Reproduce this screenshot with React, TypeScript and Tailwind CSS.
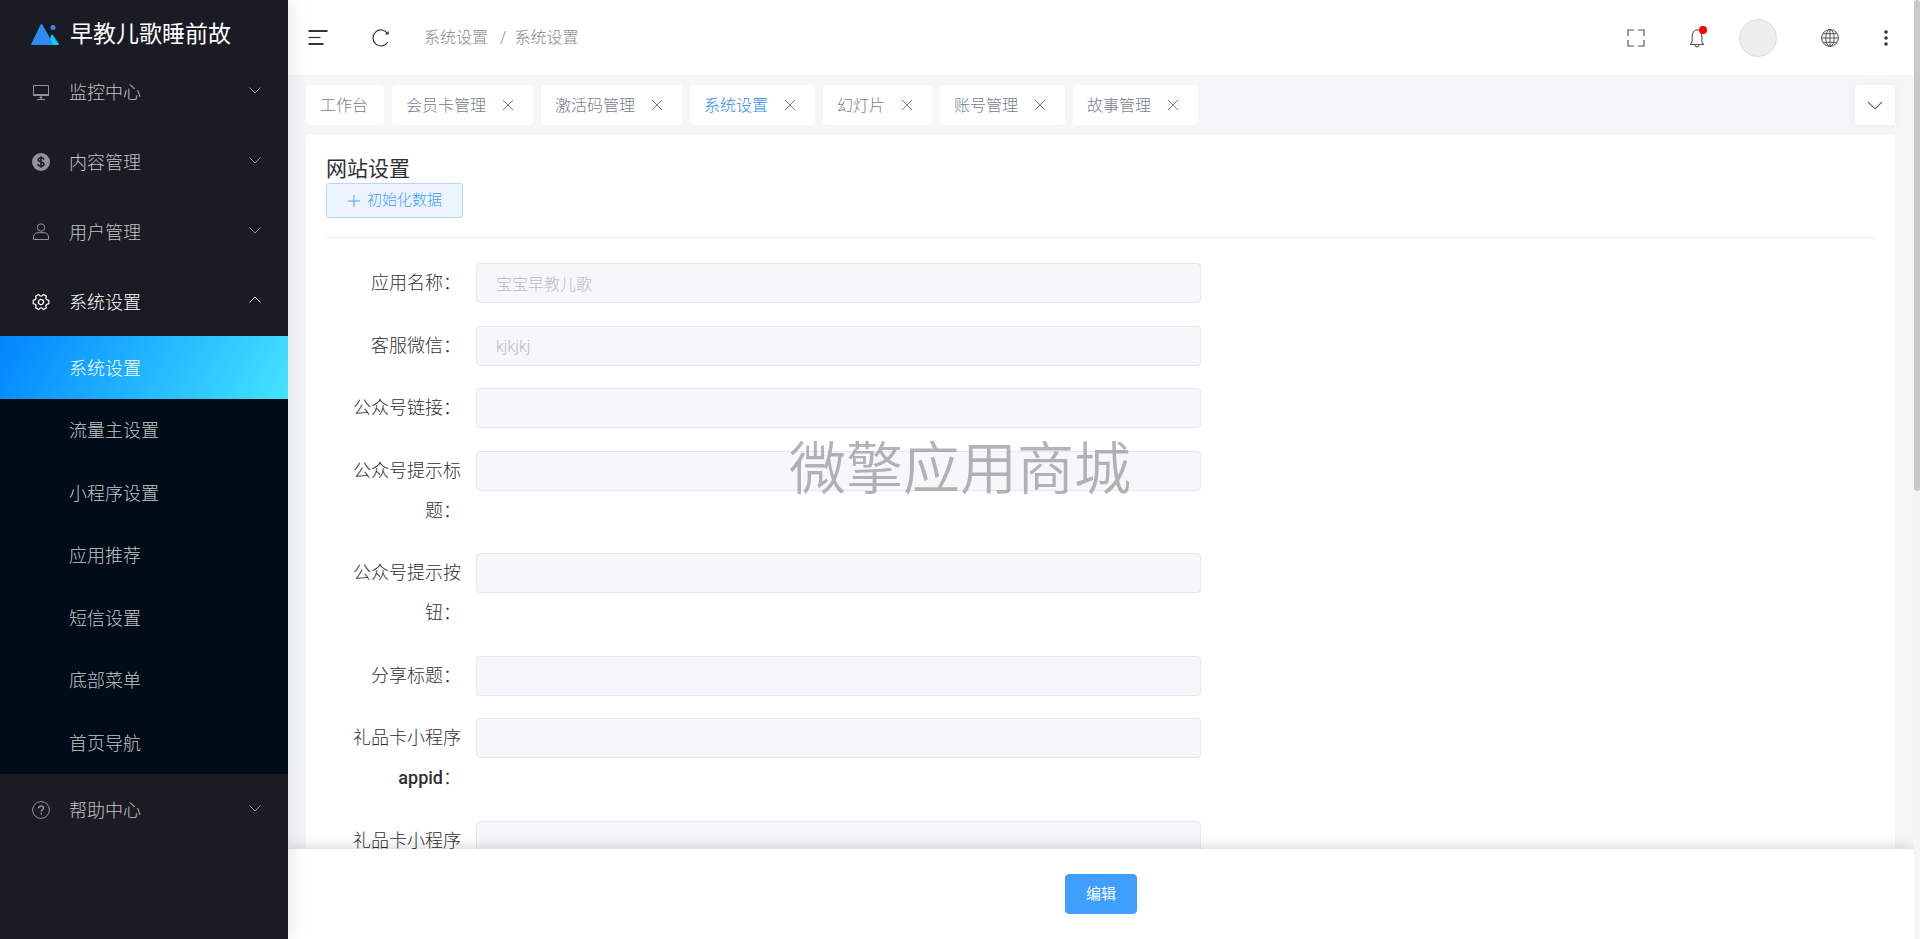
import React from 'react';
import clsx from 'clsx';

type IconProps = { className?: string };

const LogoIcon = () => (
  <svg viewBox="0 0 28 22" className="w-7 h-[22px]" aria-hidden="true">
    <path d="M20.2 12.2a1 1 0 0 1 1.8 0l5.6 8.6a.7.7 0 0 1-.6 1.2H17z" fill="#00d0ff" />
    <path d="M9.6 1.6a1 1 0 0 1 1.8 0l10.3 18.6a1.200 1.200 0 0 1-1 1.800H.8a.7.7 0 0 1-.6-1.100z" fill="#2d8cf0" />
    <circle cx="22" cy="4.500" r="2.500" fill="#2d8cf0" />
  </svg>
);

const MonitorIcon = () => (
  <svg viewBox="0 0 18 18" className="size-[18px]" fill="none" stroke="currentColor" aria-hidden="true">
    <path d="M1.500 2.500h15v9.500h-15z" />
    <path d="M1 12h16" strokeWidth="2" />
    <path d="M9 13v3M5 16.500h8" strokeWidth="1.200" />
    <path d="M7.500 14.500h3" />
  </svg>
);

const DollarIcon = () => (
  <svg viewBox="0 0 18 18" className="size-[18px]" aria-hidden="true">
    <circle cx="9" cy="9" r="9" fill="currentColor" />
    <path
      d="M11.800 6.700C11.600 5.500 10.500 4.800 9 4.800c-1.600 0-2.800.7-2.800 2 0 2.800 5.800 1.500 5.800 4.300 0 1.300-1.300 2.100-3 2.100s-2.900-.8-3-2.200M9 3.200v11.600"
      fill="none"
      stroke="#1b1b24"
      strokeWidth="1.500"
    />
  </svg>
);

const UserIcon = () => (
  <svg viewBox="0 0 18 18" className="size-[18px]" fill="none" stroke="currentColor" aria-hidden="true">
    <circle cx="9" cy="4.500" r="3.700" />
    <path d="M1.500 16.500v-2.500c0-2.700 2-4.300 4.500-4.300h6c2.500 0 4.500 1.600 4.500 4.300v2.500z" />
  </svg>
);

const SettingIcon = () => (
  <svg viewBox="32 32 960 960" className="size-[18px]" fill="currentColor" aria-hidden="true">
    <path
      transform="rotate(30 512 512)"
      d="M600.704 64a32 32 0 0 1 30.464 22.208l35.2 109.376c14.784 7.232 28.928 15.360 42.432 24.512l112.384-24.192a32 32 0 0 1 34.432 15.360L944.320 364.800a32 32 0 0 1-4.032 37.504l-77.120 85.120a357.120 357.120 0 0 1 0 49.024l77.120 85.248a32 32 0 0 1 4.032 37.504l-88.704 153.600a32 32 0 0 1-34.432 15.296L708.800 803.904c-13.440 9.088-27.648 17.280-42.368 24.512l-35.264 109.376A32 32 0 0 1 600.704 960H423.296a32 32 0 0 1-30.464-22.208L357.696 828.480a351.616 351.616 0 0 1-42.560-24.640l-112.320 24.256a32 32 0 0 1-34.432-15.360L79.680 659.200a32 32 0 0 1 4.032-37.504l77.120-85.248a357.120 357.120 0 0 1 0-48.896l-77.120-85.248A32 32 0 0 1 79.680 364.800l88.704-153.600a32 32 0 0 1 34.432-15.296l112.320 24.256c13.568-9.152 27.776-17.408 42.560-24.640l35.200-109.312A32 32 0 0 1 423.232 64H600.640zm-23.424 64H446.720l-36.352 113.088-24.512 11.968a294.113 294.113 0 0 0-34.816 20.096l-22.656 15.360-116.224-25.088-65.280 113.152 79.680 88.192-1.920 27.136a293.120 293.120 0 0 0 0 40.192l1.920 27.136-79.808 88.192 65.344 113.152 116.224-25.024 22.656 15.296a294.113 294.113 0 0 0 34.816 20.096l24.512 11.968L446.720 896h130.688l36.480-113.152 24.448-11.904a288.282 288.282 0 0 0 34.752-20.096l22.592-15.296 116.288 25.024 65.280-113.152-79.744-88.192 1.920-27.136a293.120 293.120 0 0 0 0-40.256l-1.920-27.136 79.808-88.128-65.344-113.152-116.288 24.960-22.592-15.232a287.616 287.616 0 0 0-34.752-20.096l-24.448-11.904L577.344 128zM512 345a167 167 0 1 1 0 334 167 167 0 0 1 0-334zm0 64a103 103 0 1 0 0 206 103 103 0 0 0 0-206z"
    />
  </svg>
);

const HelpIcon = () => (
  <svg viewBox="0 0 18 18" className="size-[18px]" fill="none" stroke="currentColor" aria-hidden="true">
    <circle cx="9" cy="9" r="8.400" />
    <path d="M6.700 7.300c0-1.400 1-2.200 2.400-2.200s2.400.8 2.400 2c0 1.700-2.300 1.700-2.300 3.500" strokeWidth="1.500" />
    <path d="M9.200 11.800v1.600" strokeWidth="1.500" />
  </svg>
);

const ChevronIcon = ({ className }: IconProps) => (
  <svg viewBox="0 0 14 14" className={className} fill="none" stroke="currentColor" aria-hidden="true">
    <path d="M1.500 4.500 7 10l5.500-5.500" />
  </svg>
);

const CloseIcon = () => (
  <svg viewBox="0 0 18 18" className="size-[18px]" fill="none" stroke="currentColor" aria-hidden="true">
    <path d="m4 4 10 10M14 4 4 14" />
  </svg>
);

const FoldIcon = () => (
  <svg viewBox="0 0 20 20" className="size-5" fill="none" stroke="currentColor" strokeWidth="1.800" aria-hidden="true">
    <path d="M.5 3h19M.5 16h15" />
    <path d="M.5 9.500h12" strokeWidth="1.200" />
  </svg>
);

const RefreshIcon = () => (
  <svg viewBox="0 0 18 18" className="size-[18px]" fill="none" stroke="currentColor" strokeWidth="1.200" aria-hidden="true">
    <path d="M15.800 13.200A8 8 0 1 1 15.500 4.300" />
    <path d="M16.600 2v3.600h-3.800z" fill="currentColor" stroke="none" />
  </svg>
);

const FullscreenIcon = () => (
  <svg viewBox="0 0 18 18" className="size-[18px]" fill="none" stroke="currentColor" strokeWidth="1.200" aria-hidden="true">
    <path d="M1 7V1h6M11 1h6v6M17 11v6h-6M7 17H1v-6" />
  </svg>
);

const BellIcon = () => (
  <svg viewBox="0 0 16 20" className="w-4 h-5" fill="none" stroke="currentColor" strokeWidth="1.100" aria-hidden="true">
    <path d="M8 1v1M1 16.500h14M1.500 16.500c1-1.200 1.700-2.300 1.700-4V8.200c0-3.500 2-6.200 4.800-6.200s4.800 2.700 4.800 6.200v4.300c0 1.700.7 2.800 1.700 4" />
    <path d="M5.800 17.200a2.300 2.300 0 0 0 4.400 0" />
  </svg>
);

const GlobeIcon = () => (
  <svg viewBox="0 0 18 18" className="size-[18px]" fill="none" stroke="currentColor" aria-hidden="true">
    <circle cx="9" cy="9" r="8.400" />
    <ellipse cx="9" cy="9" rx="4.200" ry="8.400" />
    <path d="M9 .5v17M.5 9h17M2 4.700h14M2 13.300h14" />
  </svg>
);

const MoreIcon = () => (
  <svg viewBox="0 0 4 18" className="w-1 h-[18px]" fill="currentColor" aria-hidden="true">
    <circle cx="2" cy="3" r="1.800" />
    <circle cx="2" cy="9" r="1.800" />
    <circle cx="2" cy="15" r="1.800" />
  </svg>
);

const menus = [
  { title: '监控中心', icon: MonitorIcon },
  { title: '内容管理', icon: DollarIcon },
  { title: '用户管理', icon: UserIcon },
  {
    title: '系统设置',
    icon: SettingIcon,
    children: ['系统设置', '流量主设置', '小程序设置', '应用推荐', '短信设置', '底部菜单', '首页导航'],
  },
  { title: '帮助中心', icon: HelpIcon },
];

const tabs = [
  { title: '工作台', closable: false },
  { title: '会员卡管理', closable: true },
  { title: '激活码管理', closable: true },
  { title: '系统设置', closable: true, active: true },
  { title: '幻灯片', closable: true },
  { title: '账号管理', closable: true },
  { title: '故事管理', closable: true },
];

const fields = [
  { id: 'name', label: '应用名称：', value: '宝宝早教儿歌' },
  { id: 'wechat', label: '客服微信：', value: 'kjkjkj' },
  { id: 'link', label: '公众号链接：', value: '' },
  { id: 'tip-title', label: '公众号提示标题：', value: '' },
  { id: 'tip-button', label: '公众号提示按钮：', value: '' },
  { id: 'share-title', label: '分享标题：', value: '' },
  { id: 'gift-appid', label: '礼品卡小程序appid：', value: '' },
  { id: 'gift-path', label: '礼品卡小程序', value: '' },
];

const Sidebar = () => (
  <aside className="relative z-20 w-72 shrink-0 bg-[#1b1b24] shadow-[0_0_20px_rgba(0,0,0,0.12)]">
    <div className="flex items-center gap-[11px] h-14 pl-[31px] pt-3">
      <LogoIcon />
      <span className="pt-0.5 text-[23px] leading-7 font-normal text-white whitespace-nowrap">早教儿歌睡前故</span>
    </div>
    <nav>
      {menus.map(({ title, icon: Icon, children }) => (
        <div key={title}>
          <button
            type="button"
            className={clsx(
              'flex items-center w-full h-[70px] pt-0.5 pl-8 pr-[26px] text-lg',
              children ? 'text-white' : 'text-[#909399]'
            )}
          >
            <Icon />
            <span className={clsx('ml-[19px] pt-0.5', children ? 'text-white' : 'text-[#c4c4c6]')}>{title}</span>
            <ChevronIcon className={clsx('ml-auto mb-1 size-3.5', children && 'rotate-180')} />
          </button>
          {children && (
            <ul className="bg-[#000c17]">
              {children.map((child, i) => (
                <li key={child} className="odd:h-[63px] even:h-[62px]">
                  <a
                    href="#"
                    className={clsx(
                      'flex items-center h-full pt-0.5 pl-[69px] text-lg',
                      i === 0
                        ? 'text-white bg-[linear-gradient(118deg,#0086ff,#44e3ff)]'
                        : 'text-[#c2c5c8]'
                    )}
                  >
                    {child}
                  </a>
                </li>
              ))}
            </ul>
          )}
        </div>
      ))}
    </nav>
  </aside>
);

const Header = () => (
  <header className="flex items-center h-[75px] shrink-0 pl-5 pr-[26px] bg-white text-[#333]">
    <button type="button" aria-label="折叠菜单">
      <FoldIcon />
    </button>
    <button type="button" aria-label="刷新" className="ml-11">
      <RefreshIcon />
    </button>
    <nav className="flex items-center ml-[34px] text-base text-[#888]">
      <a href="#">系统设置</a>
      <span className="ml-3 mr-2">/</span>
      <a href="#">系统设置</a>
    </nav>
    <div className="flex items-center ml-auto text-[#555]">
      <button type="button" aria-label="全屏">
        <FullscreenIcon />
      </button>
      <button type="button" aria-label="消息" className="relative ml-11">
        <BellIcon />
        <span className="absolute -top-0.5 -right-0.5 size-2 rounded-full bg-[#f00]" />
      </button>
      <button type="button" aria-label="账号" className="ml-[34px] size-[38px] rounded-full bg-[#eee] border border-[#ddd]" />
      <button type="button" aria-label="语言" className="ml-11">
        <GlobeIcon />
      </button>
      <button type="button" aria-label="更多" className="ml-[45px] text-[#333]">
        <MoreIcon />
      </button>
    </div>
  </header>
);

const TabBar = () => (
  <div className="flex items-center justify-between py-2.5">
    <div className="flex gap-2">
      {tabs.map(tab => (
        <div
          key={tab.title}
          className="flex items-center gap-[13px] h-10 pl-3.5 pr-4 rounded bg-white text-base text-[#777d8c]"
        >
          <a href="#" className={clsx('pt-0.5', tab.active && 'text-[#2d8cf0]')}>{tab.title}</a>
          {tab.closable && (
            <button type="button" aria-label="关闭">
              <CloseIcon />
            </button>
          )}
        </div>
      ))}
    </div>
    <button
      type="button"
      aria-label="更多标签"
      className="flex items-center justify-center size-10 rounded bg-white text-[#555] shadow-[0_0_8px_rgba(0,0,0,0.05)]"
    >
      <ChevronIcon className="size-[18px] stroke-[0.8]" />
    </button>
  </div>
);

const SettingsForm = () => (
  <form className="pt-[25px]">
    {fields.map(field => (
      <div key={field.id} className="flex items-start odd:mb-[23px] even:mb-[22px]">
        <label htmlFor={field.id} className="w-[150px] shrink-0 pr-[15px] text-right text-lg leading-10 text-[#303030]">
          {field.label.split(/([a-z]+)/).map((part, i) =>
            i % 2 ? <span key={i} className="font-medium">{part}</span> : part
          )}
        </label>
        <input
          id={field.id}
          type="text"
          disabled
          defaultValue={field.value}
          className="w-full max-w-[725px] h-10 px-[19px] rounded border border-[#e4e7ed] bg-[#f5f7fb] text-base text-[#b8bcc4]"
        />
      </div>
    ))}
  </form>
);

const App = () => {
  return (
    <div className="flex h-screen overflow-hidden bg-[#f5f6f8] font-['Roboto','Noto_Sans_CJK_SC',sans-serif] font-light">
      <Sidebar />
      <div className="flex flex-col flex-1 min-w-0">
        <Header />
        <main className="flex-1 min-h-0 overflow-hidden pl-[18px] pr-[19px]">
          <TabBar />
          <section className="p-5 rounded bg-white">
            <h1 className="pt-px text-[21px] leading-[27px] font-normal text-[#303133]">网站设置</h1>
            <button
              type="button"
              className="flex items-center gap-1.5 h-[35px] px-5 rounded-[3px] border border-[#b3d8ff] bg-[#ecf5ff] text-[15px] text-[#409eff]"
            >
              <svg viewBox="0 0 15 15" className="size-3.5" fill="none" stroke="currentColor" aria-hidden="true">
                <path d="M7.500 1v13M1 7.500h13" />
              </svg>
              初始化数据
            </button>
            <hr className="mt-[19px] border-[#ebeef0]" />
            <SettingsForm />
          </section>
        </main>
        <footer className="relative z-10 flex items-center justify-center h-[90px] shrink-0 bg-white shadow-[0_0_15px_rgba(0,0,0,0.2)]">
          <button type="button" className="h-10 px-5 rounded border border-[#409eff] bg-[#409eff] text-[15px] font-normal text-white">
            编辑
          </button>
        </footer>
      </div>
      <div className="relative z-10 w-1.5 shrink-0 bg-[#f5f5f5]">
        <div className="h-[491px] rounded-full bg-[#c9c9c9]" />
      </div>
      <div className="fixed inset-0 z-30 flex items-center justify-center pointer-events-none text-[57px] leading-none font-[350] text-[#8c8c8c]/65">
        微擎应用商城
      </div>
    </div>
  );
};

export default App;
